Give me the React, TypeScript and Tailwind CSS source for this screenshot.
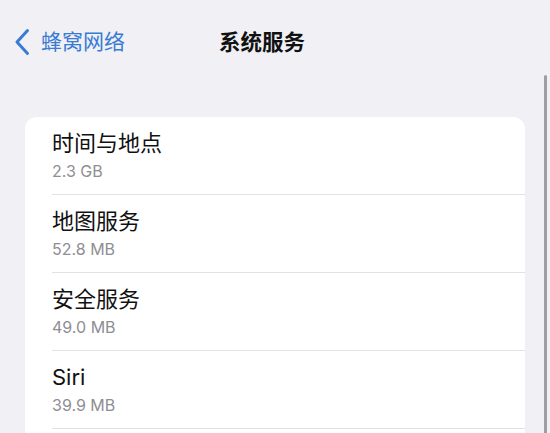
interface UsageRow {
  name: string;
  size: string;
}

const rows: UsageRow[] = [
  { name: '时间与地点', size: '2.3 GB' },
  { name: '地图服务', size: '52.8 MB' },
  { name: '安全服务', size: '49.0 MB' },
  { name: 'Siri', size: '39.9 MB' },
];

const font = { fontFamily: 'Inter, "Noto Sans CJK SC", sans-serif' };

const App = () => {
  return (
    <div className="relative w-[550px] h-[433px] overflow-hidden bg-[#f0f0f5]" style={font}>
      {/* nav bar */}
      <div className="flex items-center h-[44px] mt-[20px]">
        <div className="flex items-center w-[219px] pl-[14px] text-[#3a7bd2]">
          <svg width="16" height="28" viewBox="0 0 16 28" fill="none">
            <path d="M13.5 2.5 L3 14 L13.5 25.5" stroke="currentColor" strokeWidth="3" strokeLinecap="round" strokeLinejoin="round" />
          </svg>
          <span className="ml-[11px] text-[21px] leading-[28px]">蜂窝网络</span>
        </div>
        <span className="text-[21.5px] leading-[28px] font-bold text-[#111]">系统服务</span>
      </div>

      {/* list */}
      <div className="ml-[25px] mt-[53px] w-[500px] h-[400px] bg-white rounded-[12px]">
        {rows.map((row, index) => (
          <div key={index} className="pl-[27px]">
            <div className="flex flex-col h-[78px] pt-[12px] border-b border-[#e2e2e5]">
              <span className="text-[22px] leading-[28px] text-[#111]">{row.name}</span>
              <span className="mt-[4px] text-[16px] leading-[20px] text-[#8e8e93]">{row.size}</span>
            </div>
          </div>
        ))}
      </div>

      {/* scroll indicator */}
      <div className="absolute right-[3px] top-[75px] w-[3px] h-[380px] rounded-full bg-[#9e9ea4]" />
    </div>
  );
};

export default App;
